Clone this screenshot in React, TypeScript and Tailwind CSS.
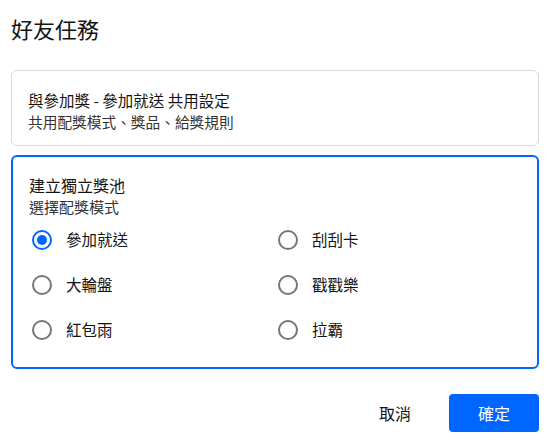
import React, { useState } from 'react';

const FONT = { fontFamily: '"Noto Sans CJK TC", "Noto Sans", sans-serif' };

const options = [
  { id: 'join', label: '參加就送' },
  { id: 'scratch', label: '刮刮卡' },
  { id: 'wheel', label: '大輪盤' },
  { id: 'poke', label: '戳戳樂' },
  { id: 'redpacket', label: '紅包雨' },
  { id: 'slot', label: '拉霸' },
];

function Radio({ checked }: { checked: boolean }) {
  return (
    <span
      className={`flex h-5 w-5 shrink-0 items-center justify-center rounded-full border-2 ${
        checked ? 'border-[#0066ff]' : 'border-[#767676]'
      }`}
    >
      {checked && <span className="h-[10px] w-[10px] rounded-full bg-[#0066ff]" />}
    </span>
  );
}

export default function App() {
  const [mode, setMode] = useState('join');

  return (
    <div className="min-h-screen bg-white pl-[11px] pr-[10px] pt-[13px] text-[#141414]" style={FONT}>
      <h1 className="text-[22px] leading-[30px] font-normal">好友任務</h1>

      <div className="mt-[27px] rounded-[6px] border border-[#d9d9d9] px-4 pt-[17px] pb-[13px]">
        <p className="text-[15.5px] leading-6">與參加獎 - 參加就送 共用設定</p>
        <p className="text-[14.7px] leading-5 text-[#333]">共用配獎模式、獎品、給獎規則</p>
      </div>

      <div className="mt-[9px] rounded-[6px] border-2 border-[#0066ff] px-4 pt-4 pb-[15px]">
        <p className="text-[16px] leading-6">建立獨立獎池</p>
        <p className="text-[15px] leading-5 text-[#333]">選擇配獎模式</p>
        <div className="grid grid-cols-2">
          {options.map((o) => (
            <label
              key={o.id}
              onClick={() => setMode(o.id)}
              className="flex h-[45px] cursor-pointer items-center gap-[14px] pl-[3px]"
            >
              <Radio checked={mode === o.id} />
              <span className="text-[15.5px]">{o.label}</span>
            </label>
          ))}
        </div>
      </div>

      <div className="mt-[25px] flex items-center justify-end gap-5">
        <button className="h-[38px] px-[18px] text-[16px] text-[#141414]">取消</button>
        <button className="h-[38px] w-[90px] rounded-[4px] bg-[#0066ff] text-[16px] text-white">
          確定
        </button>
      </div>
    </div>
  );
}
